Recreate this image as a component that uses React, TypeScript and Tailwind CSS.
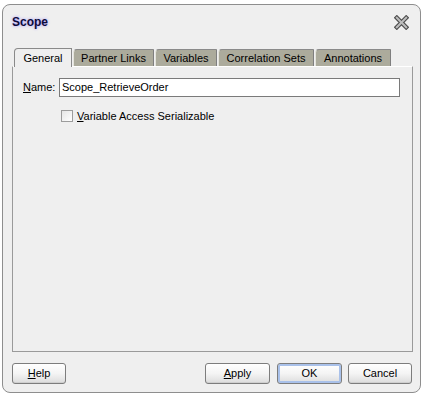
import React from "react";

const tabs = [
  { label: "General", w: "w-[58px]", active: true },
  { label: "Partner Links", w: "w-[81px]", active: false },
  { label: "Variables", w: "w-[62px]", active: false },
  { label: "Correlation Sets", w: "w-[96px]", active: false },
  { label: "Annotations", w: "w-[76px]", active: false },
];

function CloseIcon() {
  return (
    <svg width="15" height="15" viewBox="0 0 16 16">
      <path d="M3 3 L13 13 M13 3 L3 13" stroke="#4a4a4a" strokeWidth="4.6" strokeLinecap="square" />
      <path d="M3 3 L13 13 M13 3 L3 13" stroke="#bdbdbd" strokeWidth="2.2" strokeLinecap="square" />
    </svg>
  );
}

function Button({ children, w, isDefault }: { children: React.ReactNode; w: string; isDefault?: boolean }) {
  return (
    <div
      className={`${w} h-[21px] rounded-[3px] border border-[#7d7d7d] bg-gradient-to-b from-white via-[#f4f4f4] to-[#dcdcdc] flex items-center justify-center text-[11px] text-black ${
        isDefault ? "shadow-[inset_0_0_0_2px_#a9c1ea]" : "shadow-[inset_0_-1px_0_#cfcfcf]"
      }`}
    >
      {children}
    </div>
  );
}

export default function App() {
  return (
    <div className="w-[423px] h-[395px] bg-white font-['Liberation_Sans',Arial,sans-serif] pt-[4px] pl-[2px]">
      <div className="w-[419px] h-[389px] rounded-[8px] border border-[#8e8e8e] bg-[#efefef] flex flex-col pl-[9px] pr-[7px]">
        {/* title bar */}
        <div className="h-[32px] pt-[2px] flex items-center justify-between">
          <span className="text-[12px] font-bold text-[#0c0c3a] [text-shadow:0_0_3px_#9f8cff]">Scope</span>
          <div className="mr-[4px] mt-[1px]">
            <CloseIcon />
          </div>
        </div>

        {/* tab strip */}
        <div className="mt-[11px] h-[18px] flex items-end pl-[2px] gap-[1px]">
          {tabs.map((t) =>
            t.active ? (
              <div
                key={t.label}
                className={`${t.w} h-[19px] -mb-px relative z-10 rounded-tl-[4px] border-t border-l border-r border-[#8a8a8a] bg-[#efefef] flex items-center justify-center text-[11px] text-black`}
              >
                {t.label}
              </div>
            ) : (
              <div
                key={t.label}
                className={`${t.w} h-[17px] rounded-tl-[4px] border-t border-t-[#8a8a8a] border-l border-l-[#e4e4dc] border-r border-r-[#7f7f7f] bg-[#acab9c] flex items-center justify-center text-[11px] text-black`}
              >
                {t.label}
              </div>
            )
          )}
        </div>

        {/* panel */}
        <div className="h-[286px] border border-[#9a9a9a] border-t-white bg-[#efefef] flex flex-col">
          <div className="mt-[11px] flex items-center">
            <span className="ml-[10px] w-[36px] text-[11px] text-black">
              <span className="underline">N</span>ame:
            </span>
            <div className="w-[341px] h-[19px] border border-[#7a7a7a] bg-white flex items-center pl-[2px] text-[11px] text-black">
              Scope_RetrieveOrder
            </div>
          </div>
          <div className="mt-[11px] ml-[48px] flex items-center">
            <div className="w-[12px] h-[12px] border border-[#9c9c9c] bg-gradient-to-br from-[#e6e6e6] to-white" />
            <span className="ml-[4px] text-[11px] text-black">
              <span className="underline">V</span>ariable Access Serializable
            </span>
          </div>
        </div>

        {/* buttons */}
        <div className="mt-[11px] mr-[1px] flex items-center">
          <Button w="w-[54px]">
            <span>
              <span className="underline">H</span>elp
            </span>
          </Button>
          <div className="flex-1" />
          <div className="flex">
            <Button w="w-[65px]">
              <span>
                <span className="underline">A</span>pply
              </span>
            </Button>
            <div className="w-[7px]" />
            <Button w="w-[65px]" isDefault>
              OK
            </Button>
            <div className="w-[6px]" />
            <Button w="w-[64px]">Cancel</Button>
          </div>
        </div>
      </div>
    </div>
  );
}
